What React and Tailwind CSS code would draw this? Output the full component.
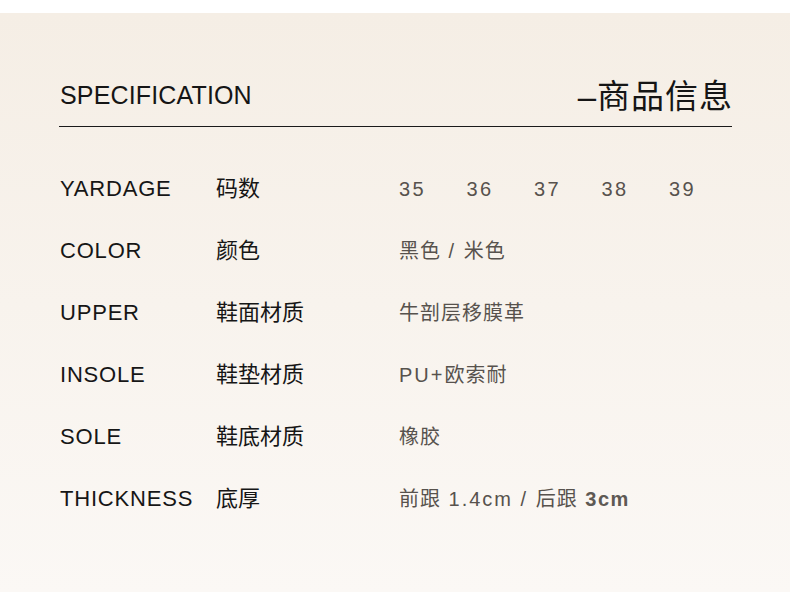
const SIZES = ['35', '36', '37', '38', '39'];

const ROWS = [
  { en: 'YARDAGE', zh: '码数', sizes: true },
  { en: 'COLOR', zh: '颜色', value: [['黑色', 'zh'], [' / ', 'en'], ['米色', 'zh']] },
  { en: 'UPPER', zh: '鞋面材质', value: [['牛剖层移膜革', 'zh']] },
  { en: 'INSOLE', zh: '鞋垫材质', value: [['PU+', 'en'], ['欧索耐', 'zh']] },
  { en: 'SOLE', zh: '鞋底材质', value: [['橡胶', 'zh']] },
  {
    en: 'THICKNESS',
    zh: '底厚',
    value: [['前跟', 'zh'], [' 1.4cm / ', 'en'], ['后跟', 'zh'], [' ', 'en'], ['3cm', 'bold']],
  },
];

const RUN = {
  zh: 'tracking-[1px]',
  en: 'tracking-[2px]',
  bold: 'tracking-[1.5px] font-bold text-[#5e5954]',
};

const FONT = "font-['Liberation_Sans','Noto_Sans_CJK_SC',sans-serif]";

export default function App() {
  return (
    <div className={`w-[790px] h-[592px] bg-white ${FONT}`}>
      <div className="w-full h-[13px] bg-white" />
      <div className="w-full h-[579px] bg-gradient-to-b from-[#f5eee5] to-[#fbf8f5] px-[59px]">
        {/* Header */}
        <div className="flex items-end justify-between h-[114px] pb-[9px] border-b border-[#1a1a1a] w-[673px]">
          <span className="text-[25px] leading-[25px] text-[#151515] pl-px mb-[9px] tracking-[0.15px]">SPECIFICATION</span>
          <span className="text-[33px] leading-[40px] text-[#151515] tracking-[1px] mr-[-1px]">–商品信息</span>
        </div>

        {/* Spec rows */}
        <div className="pt-[31px]">
          {ROWS.map((row) => (
            <div key={row.en} className="flex h-[62px] leading-[62px]">
              <span className="w-[157px] shrink-0 text-[22px] text-[#161616] pl-px tracking-[0.8px]">{row.en}</span>
              <span className="w-[183px] shrink-0 text-[22px] text-[#161616]">{row.zh}</span>
              {row.sizes ? (
                <div className="flex shrink-0 text-[20px] text-[#57524d] tracking-[2.5px]">
                  {SIZES.map((s) => (
                    <span key={s} className="w-[67.5px]">{s}</span>
                  ))}
                </div>
              ) : (
                <span className="text-[20px] text-[#57524d] whitespace-pre">
                  {row.value.map(([text, kind], i) => (
                    <span key={i} className={RUN[kind]}>{text}</span>
                  ))}
                </span>
              )}
            </div>
          ))}
        </div>
      </div>
    </div>
  );
}
